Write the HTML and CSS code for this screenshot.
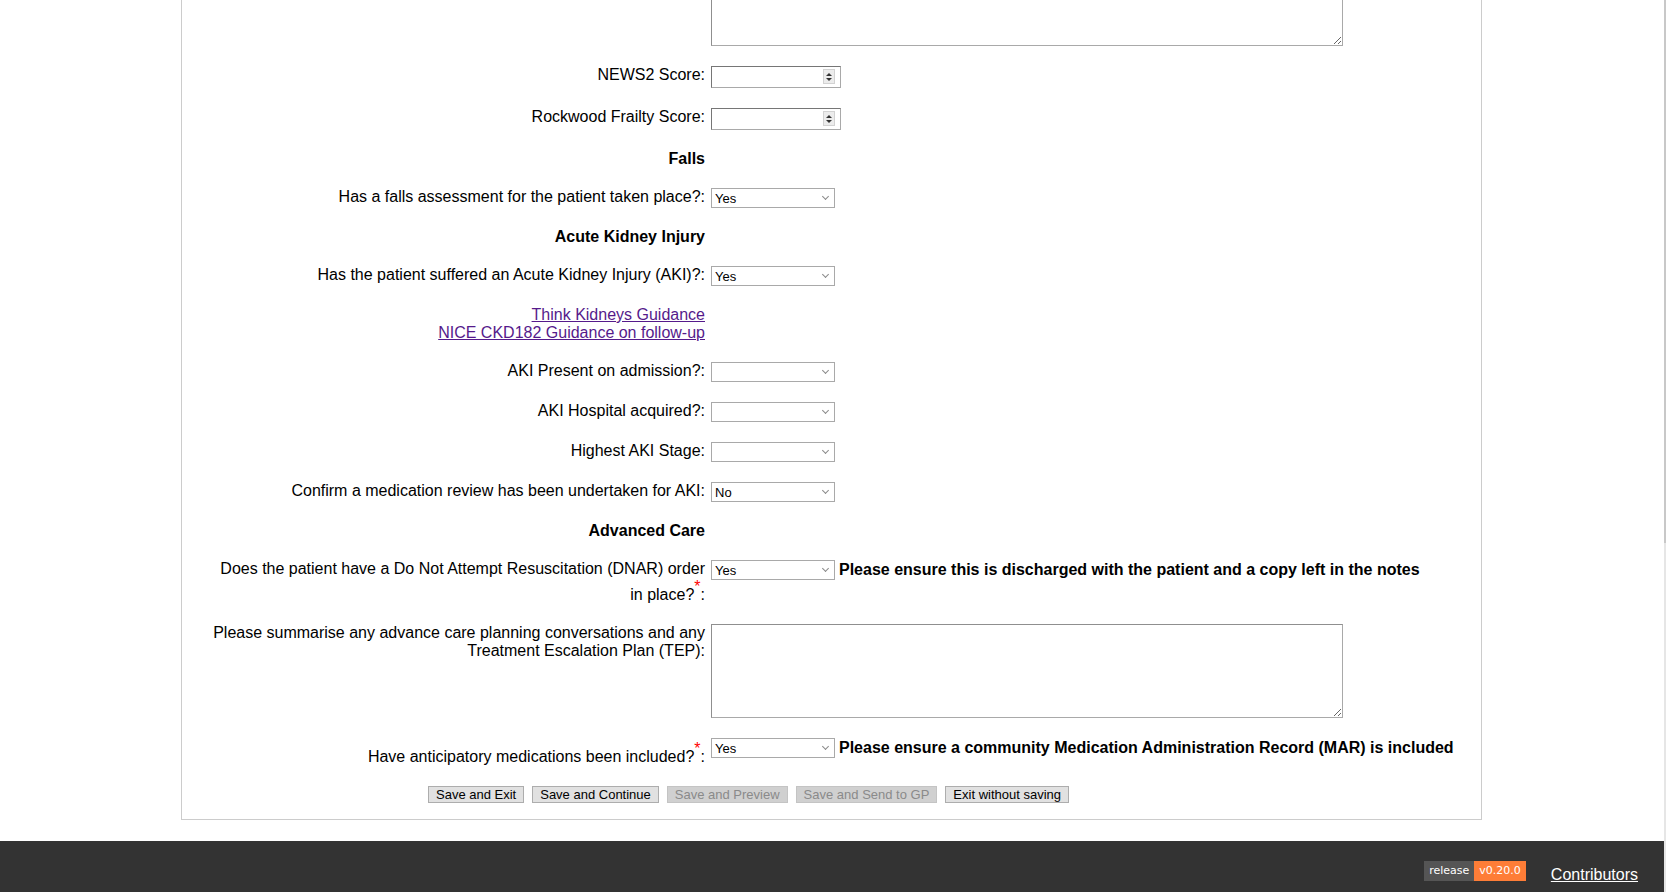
FILE: index.html
```html
<!DOCTYPE html>
<html lang="en">
<head>
<meta charset="utf-8">
<title>Discharge summary</title>
<link rel="stylesheet" href="styles.css">
</head>
<body>
<div class="main">
  <div class="panel">
    <div class="form">
      <div class="lbl"></div>
      <div class="ctl"><textarea class="ta"></textarea></div>

      <label class="lbl">NEWS2 Score:</label>
      <div class="ctl"><span class="num"><input type="text"><span class="spin"><i class="up"></i><i class="down"></i></span></span></div>

      <label class="lbl">Rockwood Frailty Score:</label>
      <div class="ctl"><span class="num"><input type="text"><span class="spin"><i class="up"></i><i class="down"></i></span></span></div>

      <div class="lbl head">Falls</div>
      <div class="ctl"></div>

      <label class="lbl">Has a falls assessment for the patient taken place?:</label>
      <div class="ctl"><span class="sel"><select><option>Yes</option></select></span></div>

      <div class="lbl head">Acute Kidney Injury</div>
      <div class="ctl"></div>

      <label class="lbl">Has the patient suffered an Acute Kidney Injury (AKI)?:</label>
      <div class="ctl"><span class="sel"><select><option>Yes</option></select></span></div>

      <div class="lbl links"><a href="#">Think Kidneys Guidance</a><br><a href="#">NICE CKD182 Guidance on follow-up</a></div>
      <div class="ctl"></div>

      <label class="lbl">AKI Present on admission?:</label>
      <div class="ctl"><span class="sel"><select><option></option></select></span></div>

      <label class="lbl">AKI Hospital acquired?:</label>
      <div class="ctl"><span class="sel"><select><option></option></select></span></div>

      <label class="lbl">Highest AKI Stage:</label>
      <div class="ctl"><span class="sel"><select><option></option></select></span></div>

      <label class="lbl">Confirm a medication review has been undertaken for AKI:</label>
      <div class="ctl"><span class="sel"><select><option>No</option></select></span></div>

      <div class="lbl head">Advanced Care</div>
      <div class="ctl"></div>

      <label class="lbl">Does the patient have a Do Not Attempt Resuscitation (DNAR) order in place?<sup class="req">*</sup>:</label>
      <div class="ctl inline"><span class="sel"><select><option>Yes</option></select></span><strong class="note">Please ensure this is discharged with the patient and a copy left in the notes</strong></div>

      <label class="lbl">Please summarise any advance care planning conversations and any Treatment Escalation Plan (TEP):</label>
      <div class="ctl"><textarea class="ta"></textarea></div>

      <label class="lbl lbl-low">Have anticipatory medications been included?<sup class="req">*</sup>:</label>
      <div class="ctl inline"><span class="sel"><select><option>Yes</option></select></span><strong class="note">Please ensure a community Medication Administration Record (MAR) is included</strong></div>
    </div>

    <div class="actions">
      <button class="btn" type="button">Save and Exit</button>
      <button class="btn" type="button">Save and Continue</button>
      <button class="btn" type="button" disabled>Save and Preview</button>
      <button class="btn" type="button" disabled>Save and Send to GP</button>
      <button class="btn" type="button">Exit without saving</button>
    </div>
  </div>
</div>

<footer class="footer">
  <span class="badge"><span class="badge-l">release</span><span class="badge-r">v0.20.0</span></span>
  <a class="contrib" href="#">Contributors</a>
</footer>

<div class="scrollbar"></div>
</body>
</html>
```

FILE: styles.css
```css
html, body {
  margin: 0;
  padding: 0;
  overflow: hidden;
  background: #ffffff;
}

body {
  font-family: "Liberation Sans", Arial, sans-serif;
  font-size: 16px;
  color: #000;
}

.main {
  padding-right: 3px;
}

.panel {
  box-sizing: border-box;
  width: 1301px;
  margin: -60px auto 0;
  padding: 11px 0 16px;
  border: 1px solid #cccccc;
}

.form {
  display: grid;
  grid-template-columns: 500px 1fr;
  column-gap: 6px;
  row-gap: 20px;
  align-items: start;
  margin-left: 23px;
}

.lbl {
  text-align: right;
  display: block;
}

.lbl-low {
  padding-top: 2px;
}

.head {
  font-weight: bold;
}

.links a {
  color: #551a8b;
  text-decoration: underline;
}

.req {
  color: #ff0000;
  font-size: 16px;
  vertical-align: 8px;
}

.inline {
  display: flex;
  align-items: center;
  gap: 4px;
}

.note {
  font-weight: bold;
  white-space: nowrap;
}

/* textarea */
.ta {
  box-sizing: border-box;
  display: block;
  width: 632px;
  height: 94px;
  margin: 0;
  border: 1px solid #a9a9a9;
  border-top-color: #8f8f8f;
  border-left-color: #8f8f8f;
  font-family: "Liberation Sans", Arial, sans-serif;
  font-size: 13px;
  background: #fff;
}

/* number inputs */
.num {
  position: relative;
  display: inline-block;
  vertical-align: top;
}

.num input {
  box-sizing: border-box;
  display: block;
  width: 130px;
  height: 22px;
  margin: 0;
  padding: 1px 3px;
  border: 1px solid #a9a9a9;
  border-top-color: #767676;
  border-left-color: #767676;
  font-family: "Liberation Sans", Arial, sans-serif;
  font-size: 13px;
  background: #fff;
}

.spin {
  position: absolute;
  right: 6px;
  top: 3px;
  box-sizing: border-box;
  width: 12px;
  height: 15px;
  background: #ececec;
  border: 1px solid #d2d2d2;
  display: flex;
  flex-direction: column;
  align-items: center;
  justify-content: center;
  gap: 2px;
}

.spin i {
  display: block;
  width: 0;
  height: 0;
  border-left: 3px solid transparent;
  border-right: 3px solid transparent;
}

.spin .up {
  border-bottom: 3px solid #333;
}

.spin .down {
  border-top: 3px solid #333;
}

/* selects */
.sel {
  position: relative;
  display: inline-block;
  vertical-align: top;
  flex: none;
}

.sel select {
  -webkit-appearance: none;
  appearance: none;
  box-sizing: border-box;
  display: block;
  width: 124px;
  height: 20px;
  margin: 0;
  padding: 0 0 0 3px;
  border: 1px solid #a9a9a9;
  border-radius: 0;
  background: #fff;
  color: #000;
  font-family: "Liberation Sans", Arial, sans-serif;
  font-size: 13px;
}

.sel::after {
  content: "";
  position: absolute;
  right: 7px;
  top: 6px;
  width: 4px;
  height: 4px;
  border-right: 1px solid #8a8a8a;
  border-bottom: 1px solid #8a8a8a;
  transform: rotate(45deg);
  pointer-events: none;
}

/* buttons */
.actions {
  display: flex;
  gap: 8px;
  margin: 20px 0 0 246px;
}

.btn {
  box-sizing: border-box;
  height: 17px;
  margin: 0;
  padding: 0 7px;
  border: 1px solid #adadad;
  border-radius: 0;
  background: #e1e1e1;
  color: #000;
  font-family: "Liberation Sans", Arial, sans-serif;
  font-size: 13px;
  line-height: 15px;
}

.btn:disabled {
  background: #d0d0d0;
  border-color: #c4c4c4;
  color: #8a8a8a;
}

/* footer */
.footer {
  box-sizing: border-box;
  height: 80px;
  margin-top: 21px;
  padding: 20px 28px 0 0;
  background: #333333;
  display: flex;
  justify-content: flex-end;
  align-items: flex-start;
}

.badge {
  display: flex;
  height: 20px;
  font-family: "DejaVu Sans", Verdana, sans-serif;
  font-size: 11px;
  line-height: 20px;
  color: #fff;
}

.badge-l {
  background: #555555;
  padding: 0 5px;
}

.badge-r {
  background: #fe7d37;
  padding: 0 5px;
}

.contrib {
  margin: 5px 0 0 25px;
  color: #ffffff;
  text-decoration: underline;
  font-size: 16px;
  line-height: 18px;
}

.scrollbar {
  position: fixed;
  top: 0;
  right: 0;
  width: 2px;
  height: 100%;
  background: linear-gradient(#c8c8c8 0, #c8c8c8 543px, #e6e6e6 543px, #e6e6e6 100%);
}
```
